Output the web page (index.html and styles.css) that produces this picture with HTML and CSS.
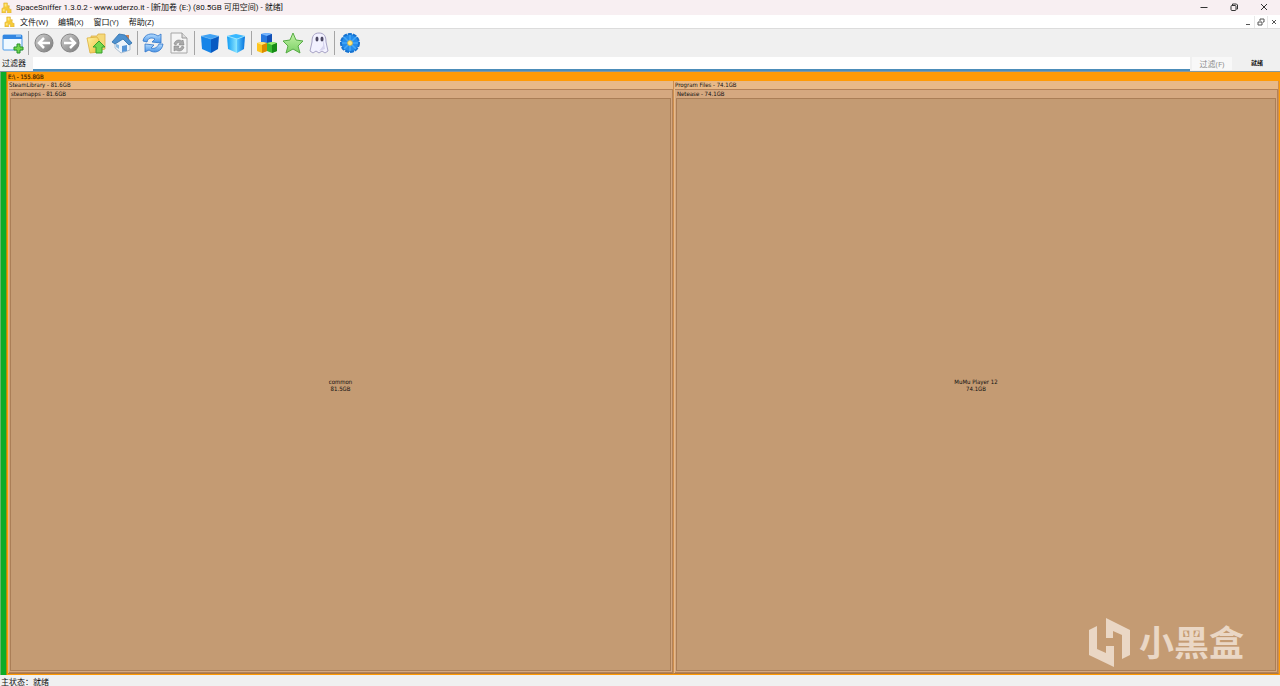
FILE: index.html
```html
<!DOCTYPE html>
<html lang="zh-CN">
<head>
<meta charset="utf-8">
<title>SpaceSniffer</title>
<link rel="stylesheet" href="styles.css">
</head>
<body>
<svg class="defs" aria-hidden="true">
  <defs>
    <linearGradient id="gray" x1="0" y1="0" x2="1" y2="1"><stop offset="0" stop-color="#d2d2d2"/><stop offset="1" stop-color="#777"/></linearGradient>
    <linearGradient id="sky" x1="0" y1="0" x2="0" y2="1"><stop offset="0" stop-color="#b5dcff"/><stop offset="1" stop-color="#4a94e6"/></linearGradient>
    <linearGradient id="gold" x1="0" y1="0" x2="1" y2="1"><stop offset="0" stop-color="#fff3a0"/><stop offset="1" stop-color="#efc040"/></linearGradient>
    <linearGradient id="leaf" x1="0" y1="0" x2="0" y2="1"><stop offset="0" stop-color="#c5f3a8"/><stop offset="1" stop-color="#7bd065"/></linearGradient>
    <linearGradient id="cyan" x1="0" y1="0" x2="1" y2="0"><stop offset="0" stop-color="#109cf5"/><stop offset="1" stop-color="#8fe8ff"/></linearGradient>
    <linearGradient id="cyan-side" x1="0" y1="0" x2="1" y2="0"><stop offset="0" stop-color="#58c8ff"/><stop offset="1" stop-color="#0673dc"/></linearGradient>
    <symbol id="puzzle" viewBox="0 0 12 12"><path d="M3 4V1h4v3h2v2H8l2 2h1v4H7V9H5v3H1V7l2-1z" fill="#f6cb37" stroke="#dcae35" stroke-width=".6"/><path d="M4 2h2v3H4zM2 8h2v2H2z" fill="#ffe779"/></symbol>
  </defs>
</svg>
<header class="titlebar">
  <svg class="puzzle"><use href="#puzzle"/></svg>
  <h1 class="title">SpaceSniffer 1.3.0.2 - www.uderzo.it - [新加卷 (E:) (80.5GB 可用空间) - 就绪]</h1>
  <div class="window-controls">
    <button aria-label="最小化"><svg viewBox="0 0 10 10"><path d="M1.500 5.500h7" /></svg></button>
    <button aria-label="还原"><svg viewBox="0 0 10 10"><rect x="2" y="3.500" width="5" height="5" rx="1"/><path d="M3.500 3V2h4l1 1v4h-1"/></svg></button>
    <button aria-label="关闭"><svg viewBox="0 0 10 10"><path d="M2 2l6 6M8 2L2 8"/></svg></button>
  </div>
</header>
<nav class="menubar">
  <svg class="puzzle"><use href="#puzzle"/></svg>
  <button>文件(W)</button><button>编辑(X)</button><button>窗口(Y)</button><button>帮助(Z)</button>
  <div class="child-controls">
    <button aria-label="最小化子窗口"><svg viewBox="0 0 10 10"><path d="M3 7.500h4"/></svg></button>
    <button aria-label="还原子窗口"><svg viewBox="0 0 10 10"><path d="M2 5h4v3H2zM4 4V2h4v3H7"/></svg></button>
    <button aria-label="关闭子窗口"><svg viewBox="0 0 10 10"><path d="M3 3l4 4M7 3L3 7"/></svg></button>
  </div>
</nav>
<div class="toolbar">
  <button aria-label="新建视图"><svg viewBox="0 0 22 22"><rect x="1" y="3" width="19" height="15" rx="1" fill="#eef8ff" stroke="#4c9be8"/><path d="M1 3h19v4H1z" fill="#3387e2"/><path d="M14 4h5" stroke="#c6e5ff"/><path d="M15 12h3v3h3v3h-3v3h-3v-3h-3v-3h3z" fill="#71d64f" stroke="#27932a"/></svg></button>
  <span class="sep"></span>
  <button aria-label="后退"><svg viewBox="0 0 22 22"><circle cx="11" cy="11" r="9" fill="url(#gray)" stroke="#858585"/><path d="M11 6l-5 5 5 5M6.500 11H17" fill="none" stroke="#fff" stroke-width="2.500"/></svg></button>
  <button aria-label="前进"><svg viewBox="0 0 22 22"><circle cx="11" cy="11" r="9" fill="url(#gray)" stroke="#858585"/><path d="M11 6l5 5-5 5M5 11h10.500" fill="none" stroke="#fff" stroke-width="2.500"/></svg></button>
  <button aria-label="上一级"><svg viewBox="0 0 22 22"><path d="M6 4h6l1-2h7v15L8 20z" fill="#f5d979" stroke="#dcae46" stroke-width=".8"/><path d="M2 6l10-1 2 3v12l-9 1z" fill="url(#gold)" stroke="#dcae3b" stroke-width=".8"/><path d="M14 9l6 6h-3v6h-6v-6H8z" fill="#75d84d" stroke="#399f2d"/></svg></button>
  <button aria-label="主页"><svg viewBox="0 0 22 22"><path d="M15 3h3v6h-3z" fill="#c9855c"/><path d="M4 10l7-6 8 7v7l-9 3-6-5z" fill="#edf4fb" stroke="#9eb4c9" stroke-width=".8"/><path d="M1 10L8 2l6 1 7 8-3 2-6-6-8 5z" fill="#4e91cf" stroke="#2d6fab" stroke-width=".8"/><path d="M11 14l5-1v6l-5 1z" fill="#5595d7"/><path d="M5 12l3 1v4l-3-2z" fill="#8abbe4"/></svg></button>
  <span class="sep"></span>
  <button aria-label="刷新"><svg viewBox="0 0 22 22"><path d="M1 9C2 2 10 0 16 4l3-2v9l-9-1 3-3C9 5 6 6 5 10z" fill="url(#sky)" stroke="#2d74c9" stroke-width=".8"/><path d="M21 12c-1 8-9 10-14 6l-4 2v-8l9 1-3 3c3 1 6 0 8-4z" fill="url(#sky)" stroke="#2d74c9" stroke-width=".8"/></svg></button>
  <button aria-label="刷新文件"><svg viewBox="0 0 22 22"><path d="M3 1h11l5 5v15H3z" fill="#f5f5f5" stroke="#a6a6a6"/><path d="M14 1v5h5" fill="#ddd" stroke="#999"/><path d="M6 12c1-4 5-5 8-3l1-1 1 5h-5l1-2c-2-1-3 0-4 2z" fill="#aaa" stroke="#777" stroke-width=".5"/><path d="M16 15c-1 4-5 5-8 3l-2 1v-5h5l-1 2c2 1 3 0 4-2z" fill="#aaa" stroke="#777" stroke-width=".5"/></svg></button>
  <span class="sep"></span>
  <button aria-label="减少细节"><svg viewBox="0 0 22 22"><path d="M2 4l9-2 9 2-8 3z" fill="#3fa2f4"/><path d="M2 4l10 3v14l-9-4z" fill="#1684e8"/><path d="M20 4l-8 3v14l7-4z" fill="#075ac2"/><path d="M2 4l10 3 8-3" fill="none" stroke="#68b7f5" stroke-width=".6"/></svg></button>
  <button aria-label="增加细节"><svg viewBox="0 0 22 22"><path d="M2 4l9-2 9 2-8 3z" fill="#38b8ff"/><path d="M2 4l10 3v14l-9-4z" fill="url(#cyan)"/><path d="M20 4l-8 3v14l7-4z" fill="url(#cyan-side)"/><path d="M2 4l10 3 8-3" fill="none" stroke="#a1e8ff" stroke-width=".8"/></svg></button>
  <span class="sep"></span>
  <button aria-label="文件类别"><svg viewBox="0 0 22 22"><path d="M5 2l6-1 5 1v8l-5 2-6-2z" fill="#2879df"/><path d="M5 2l6-1 5 1-5 2z" fill="#77b6ff"/><path d="M11 4l5-2v8l-5 2z" fill="#1250b5"/><path d="M1 11l5-1 5 1v8l-5 2-5-2z" fill="#ffc51e"/><path d="M1 11l5-1 5 1-5 2z" fill="#ffe578"/><path d="M6 13l5-2v8l-5 2z" fill="#d98b00"/><path d="M11 11l5-1 5 1v8l-5 2-5-2z" fill="#39bd32"/><path d="M11 11l5-1 5 1-5 2z" fill="#9bec70"/><path d="M16 13l5-2v8l-5 2z" fill="#178b17"/></svg></button>
  <button aria-label="收藏标记"><svg viewBox="0 0 22 22"><path d="M11 1l3 7 7 1-5 5 2 7-7-4-7 4 2-7-5-5 7-1z" fill="url(#leaf)" stroke="#57ac45" stroke-linejoin="round"/></svg></button>
  <button aria-label="显示未知空间"><svg viewBox="0 0 22 22"><path d="M4 10C4 4 6 1 11 1s7 3 7 9l2 9-3 2-3-2-3 2-3-2-3 2-3-2z" fill="#f2f1ff" stroke="#a7a3c5"/><path d="M15 5l1 6 1 6-3 1-3 1 4-5z" fill="#d7d4ee"/><ellipse cx="9" cy="7" rx="1.500" ry="2.500" fill="#4b4761"/><ellipse cx="14" cy="7" rx="1.500" ry="2.500" fill="#4b4761"/></svg></button>
  <span class="sep"></span>
  <button aria-label="设置"><svg viewBox="0 0 22 22"><circle cx="11" cy="11" r="9" fill="#248dec"/><circle cx="11" cy="11" r="9" fill="none" stroke="#1672d0" stroke-width="2" stroke-dasharray="4 1"/><path d="M11 3v16M3 11h16M5 5l12 12M17 5L5 17" stroke="#46a8f7" stroke-width="1.500"/><circle cx="11" cy="11" r="2.500" fill="#ffe87a" stroke="#caaa45" stroke-width=".7"/></svg></button>
</div>
<form class="filterbar">
  <label for="filter">过滤器</label>
  <input id="filter" type="text">
  <button type="button" class="apply" disabled>过滤(F)</button>
  <output class="ready">就绪</output>
</form>
<main class="workspace">
  <div class="free"></div>
  <section class="drive">
    <h2>E:\ - 155.8GB</h2>
    <div class="folders">
      <section class="folder">
        <h3>SteamLibrary - 81.6GB</h3>
        <section class="subfolder"><h4>steamapps - 81.6GB</h4><div class="item"><span>common</span><span>81.5GB</span></div></section>
      </section>
      <section class="folder">
        <h3>Program Files - 74.1GB</h3>
        <section class="subfolder"><h4>Netease - 74.1GB</h4><div class="item"><span>MuMu Player 12</span><span>74.1GB</span></div></section>
      </section>
    </div>
  </section>
  <div class="watermark">
    <svg viewBox="0 0 42 50"><path d="M0 12l8-4v23l9 4v-7h8v21L0 37zM17 0l24 12v25l-8 4V17l-9-4v7h-7z" fill="currentColor"/></svg>
    <span>小黑盒</span>
  </div>
</main>
<footer class="status">主状态：就绪</footer>
</body>
</html>
```
FILE: styles.css
```css
* { box-sizing: border-box; }
body {
  margin: 0;
  height: 100vh;
  display: flex;
  flex-direction: column;
  overflow: hidden;
  background: #f0f0f0;
  color: #111;
  font-family: "Open Sans", "Noto Sans CJK SC", sans-serif;
  font-size: 8px;
  line-height: 12px;
}
h1, h2, h3, h4 { margin: 0; font-weight: 400; }
button { display: flex; align-items: center; justify-content: center; padding: 0; border: 0; background: transparent; color: inherit; font: inherit; }
.defs { position: absolute; width: 0; height: 0; }
.puzzle { width: 11px; height: 11px; flex: none; }
.titlebar { display: flex; align-items: center; height: 15px; padding-left: 1px; background: #f8eff2; flex: none; }
.title { margin-left: 4px; font-family: Roboto, "Noto Sans CJK SC", sans-serif; font-size: 8px; line-height: 14px; white-space: nowrap; }
.window-controls { display: flex; margin-left: auto; padding-right: 1px; align-self: flex-start; }
.window-controls button { width: 30px; height: 14px; }
.window-controls svg { width: 10px; height: 10px; fill: none; stroke: #333; stroke-width: 1; }
.menubar { display: flex; align-items: center; height: 14px; padding-left: 4px; background: #fff; border-bottom: 1px solid #dcdcdc; flex: none; }
.menubar > button { margin-left: 5px; margin-right: 5px; white-space: nowrap; }
.child-controls { display: flex; gap: 1px; margin-left: auto; background: #e8e8e8; }
.child-controls button { width: 12px; height: 12px; background: #fff; }
.child-controls svg { width: 10px; height: 10px; fill: none; stroke: #555; }
.toolbar { display: flex; align-items: center; height: 28px; padding-left: 2px; gap: 4px; flex: none; }
.toolbar svg { width: 22px; height: 22px; display: block; }
.sep { width: 1px; height: 24px; background: #a5a5a5; }
.filterbar { display: flex; height: 14px; margin: 0; flex: none; }
.filterbar label { width: 33px; padding-left: 2px; line-height: 12px; white-space: nowrap; }
.filterbar input { flex: 1; min-width: 0; height: 14px; padding: 0 2px; border: 0; border-bottom: 2px solid #4c8dba; outline: 0; background: #fff; font: inherit; }
.apply { width: 40px; height: 13px; margin-left: 2px; background: #f8f8f8; color: #8c8c8c; }
.ready { width: 48px; padding-left: 2px; text-align: center; font-size: 6px; font-weight: 700; line-height: 13px; }
.workspace { position: relative; flex: 1; min-height: 0; display: flex; border-top: 1px solid #8498a0; background: #ff9a05; font-family: "DejaVu Sans Condensed", "DejaVu Sans", sans-serif; font-size: 6px; line-height: 8px; }
.free { width: 7px; border-left: 1px solid #68b56c; border-right: 1px solid #a58b12; background: #0cac27; }
.drive { flex: 1; min-width: 0; display: flex; flex-direction: column; padding: 0 1px 1px; }
h2 { height: 9px; font-size: 6px; line-height: 9px; color: #4a2900; -webkit-text-stroke: 0.2px #4a2900; }
.folders { flex: 1; min-height: 0; display: grid; grid-template-columns: 666fr 605fr; }
.folder { display: flex; flex-direction: column; min-width: 0; padding-left: 1px; background: #e8b988; border-right: 1px solid #ce8f4e; border-bottom: 1px solid #b1783e; }
h3 { height: 8px; font-size: 6px; line-height: 8px; }
h4 { height: 8px; padding-left: 1px; font-size: 6px; line-height: 8px; }
.subfolder { flex: 1; min-height: 0; display: flex; flex-direction: column; padding: 0 1px 1px; background: #d5a880; border: 1px solid #b38259; border-left: 0; }
.item { flex: 1; display: flex; flex-direction: column; align-items: center; justify-content: center; background: #c49b73; border: 1px solid #aa7e57; line-height: 7px; }
.watermark { position: absolute; right: 36px; bottom: 6px; display: flex; align-items: center; gap: 8px; color: #ead7c5; font-family: "Noto Sans CJK SC", sans-serif; font-size: 35px; font-weight: 700; line-height: 48px; }
.watermark span { padding-bottom: 4px; }
.watermark svg { width: 42px; height: 50px; }
.status { flex: none; height: 11px; padding-left: 1px; line-height: 14px; overflow: hidden; }
```
